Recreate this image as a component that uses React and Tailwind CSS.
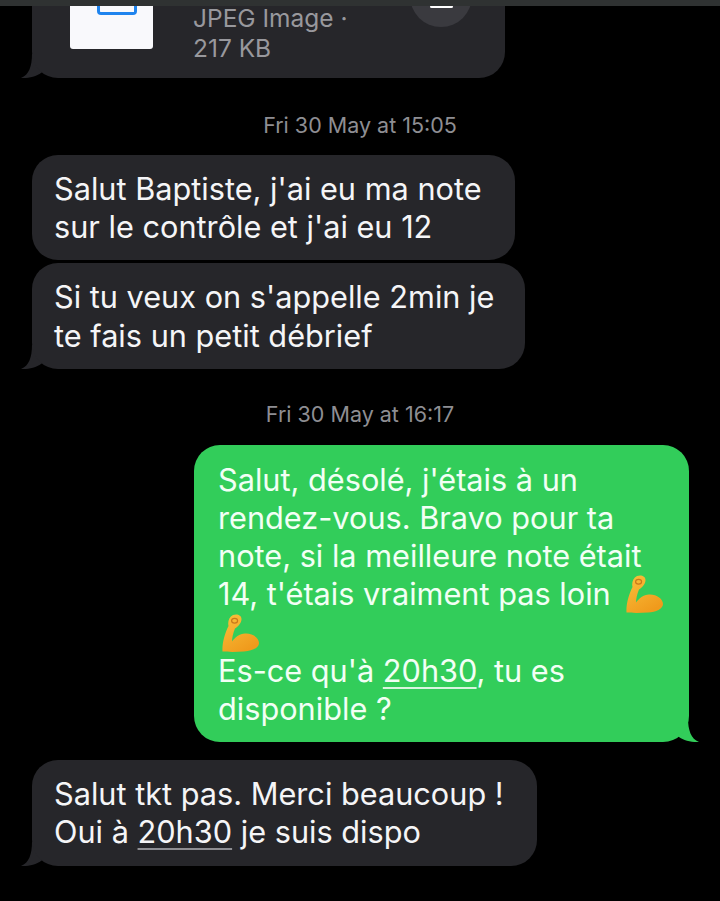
function Tail({ mine }) {
  if (mine) {
    return (
      <svg className="absolute -right-[10px] bottom-0 w-[24px] h-[24px]" viewBox="0 0 24 24">
        <path d="M13 0 C13 12 16 21 24 24 C16 24.6 7 22 2 17.5 L2 0 Z" fill="#32cd5a" />
      </svg>
    );
  }
  return (
    <svg className="absolute -left-[11px] bottom-0 w-[24px] h-[24px]" viewBox="0 0 24 24">
      <path d="M11 0 C11 12 8 21 0 24 C8 24.6 17 22 22 17.5 L22 0 Z" fill="#26262a" />
    </svg>
  );
}

function Bubble({ children, width, tail }) {
  return (
    <div className={`relative ml-[32px] ${width}`}>
      {tail && <Tail />}
      <div className="relative rounded-[26px] bg-[#26262a] px-[22px] pt-[15px] pb-[14px] text-[#f5f5f7]">
        {children}
      </div>
    </div>
  );
}

function Stamp({ children, className }) {
  return (
    <p className={`text-center text-[21.5px] leading-[24px] text-[#8e8e93] ${className}`}>{children}</p>
  );
}

function Flex({ className }) {
  return (
    <svg className={`inline-block w-[37px] h-[38px] -my-[6px] align-[-2px] ${className}`} viewBox="0 0 37 38">
      <defs>
        <linearGradient id="arm" x1="0" y1="0" x2="0.6" y2="1">
          <stop offset="0" stopColor="#f9c13c" />
          <stop offset="1" stopColor="#f09a1c" />
        </linearGradient>
      </defs>
      <path
        d="M0.5 37.5 C0 30 2.5 20 6.5 12 C5.5 8 7 3 11 1 C15 -0.5 19.5 1 19.5 5 C19.5 9 16 12.5 13 14.5 C11 19 10 24 10 27.5 C13 23.5 18 19 24 19.5 C31 19.5 37 24 37 29 C37 34 30 37 22 37.5 C14 38 6 38 0.5 37.5 Z"
        fill="url(#arm)"
      />
      <ellipse cx="12.6" cy="6.7" rx="3" ry="2.4" fill="none" stroke="#c9781a" strokeWidth="1.2" />
    </svg>
  );
}

export default function App() {
  return (
    <div className="relative h-[901px] w-[720px] overflow-hidden bg-black text-[30.7px] leading-[38.2px] font-['Inter','Liberation_Sans',sans-serif]">
      {/* Status strip at the very top */}
      <div className="relative z-10 h-[6px] bg-[#2f3232]" />

      {/* File attachment, cut off by the top of the screen */}
      <div className="relative ml-[32px] w-[473px]">
        <Tail />
        <div className="relative flex h-[72px] rounded-b-[26px] bg-[#26262a] pl-[38px]">
          <div className="relative h-[43px] w-[83px] rounded-b-[3px] bg-[#f9f9fc]">
            <div className="absolute left-[27px] top-0 h-[9px] w-[40px] rounded-b-[4px] border-[3px] border-t-0 border-[#1f84ee]" />
          </div>
          <div className="ml-[40px] w-[170px] text-[24.5px] text-[#98989d]">
            <p className="leading-[24px]">JPEG Image ·</p>
            <p className="mt-[3px] leading-[30px]">217 KB</p>
          </div>
          <div className="relative ml-[47px] -mt-[41px] flex h-[62px] w-[62px] items-end justify-center rounded-full bg-[#3a3a3f] pb-[19px]">
            <div className="h-[3px] w-[23px] rounded-[2px] bg-white" />
          </div>
        </div>
      </div>

      <Stamp className="mt-[35px]">Fri 30 May at 15:05</Stamp>

      <div className="mt-[18px]">
        <Bubble width="w-[483px]">
          Salut Baptiste, j'ai eu ma note
          <br />
          sur le contrôle et j'ai eu 12
        </Bubble>
      </div>
      <div className="mt-[3px]">
        <Bubble width="w-[493px]" tail>
          Si tu veux on s'appelle 2min je
          <br />
          te fais un petit débrief
        </Bubble>
      </div>

      <Stamp className="mt-[33px]">Fri 30 May at 16:17</Stamp>

      {/* Outgoing message */}
      <div className="relative ml-[194px] mt-[19px] w-[495px]">
        <Tail mine />
        <div className="relative rounded-[26px] bg-[#32cd5a] px-[24px] pt-[16px] pb-[14px] text-[#f2fff5]">
          Salut, désolé, j'étais à un
          <br />
          rendez-vous. Bravo pour ta
          <br />
          note, si la meilleure note était
          <br />
          14, t'étais vraiment pas loin <Flex className="ml-[7px]" />
          <br />
          <Flex className="ml-[4px]" />
          <br />
          Es-ce qu'à <span className="underline decoration-[#d8f5de] decoration-2 underline-offset-[5px]">20h30</span>, tu es
          <br />
          disponible ?
        </div>
      </div>

      <div className="mt-[18px]">
        <Bubble width="w-[505px]" tail>
          Salut tkt pas. Merci beaucoup !
          <br />
          Oui à <span className="underline decoration-[#8e8e93] decoration-2 underline-offset-[5px]">20h30</span> je suis dispo
        </Bubble>
      </div>
    </div>
  );
}
